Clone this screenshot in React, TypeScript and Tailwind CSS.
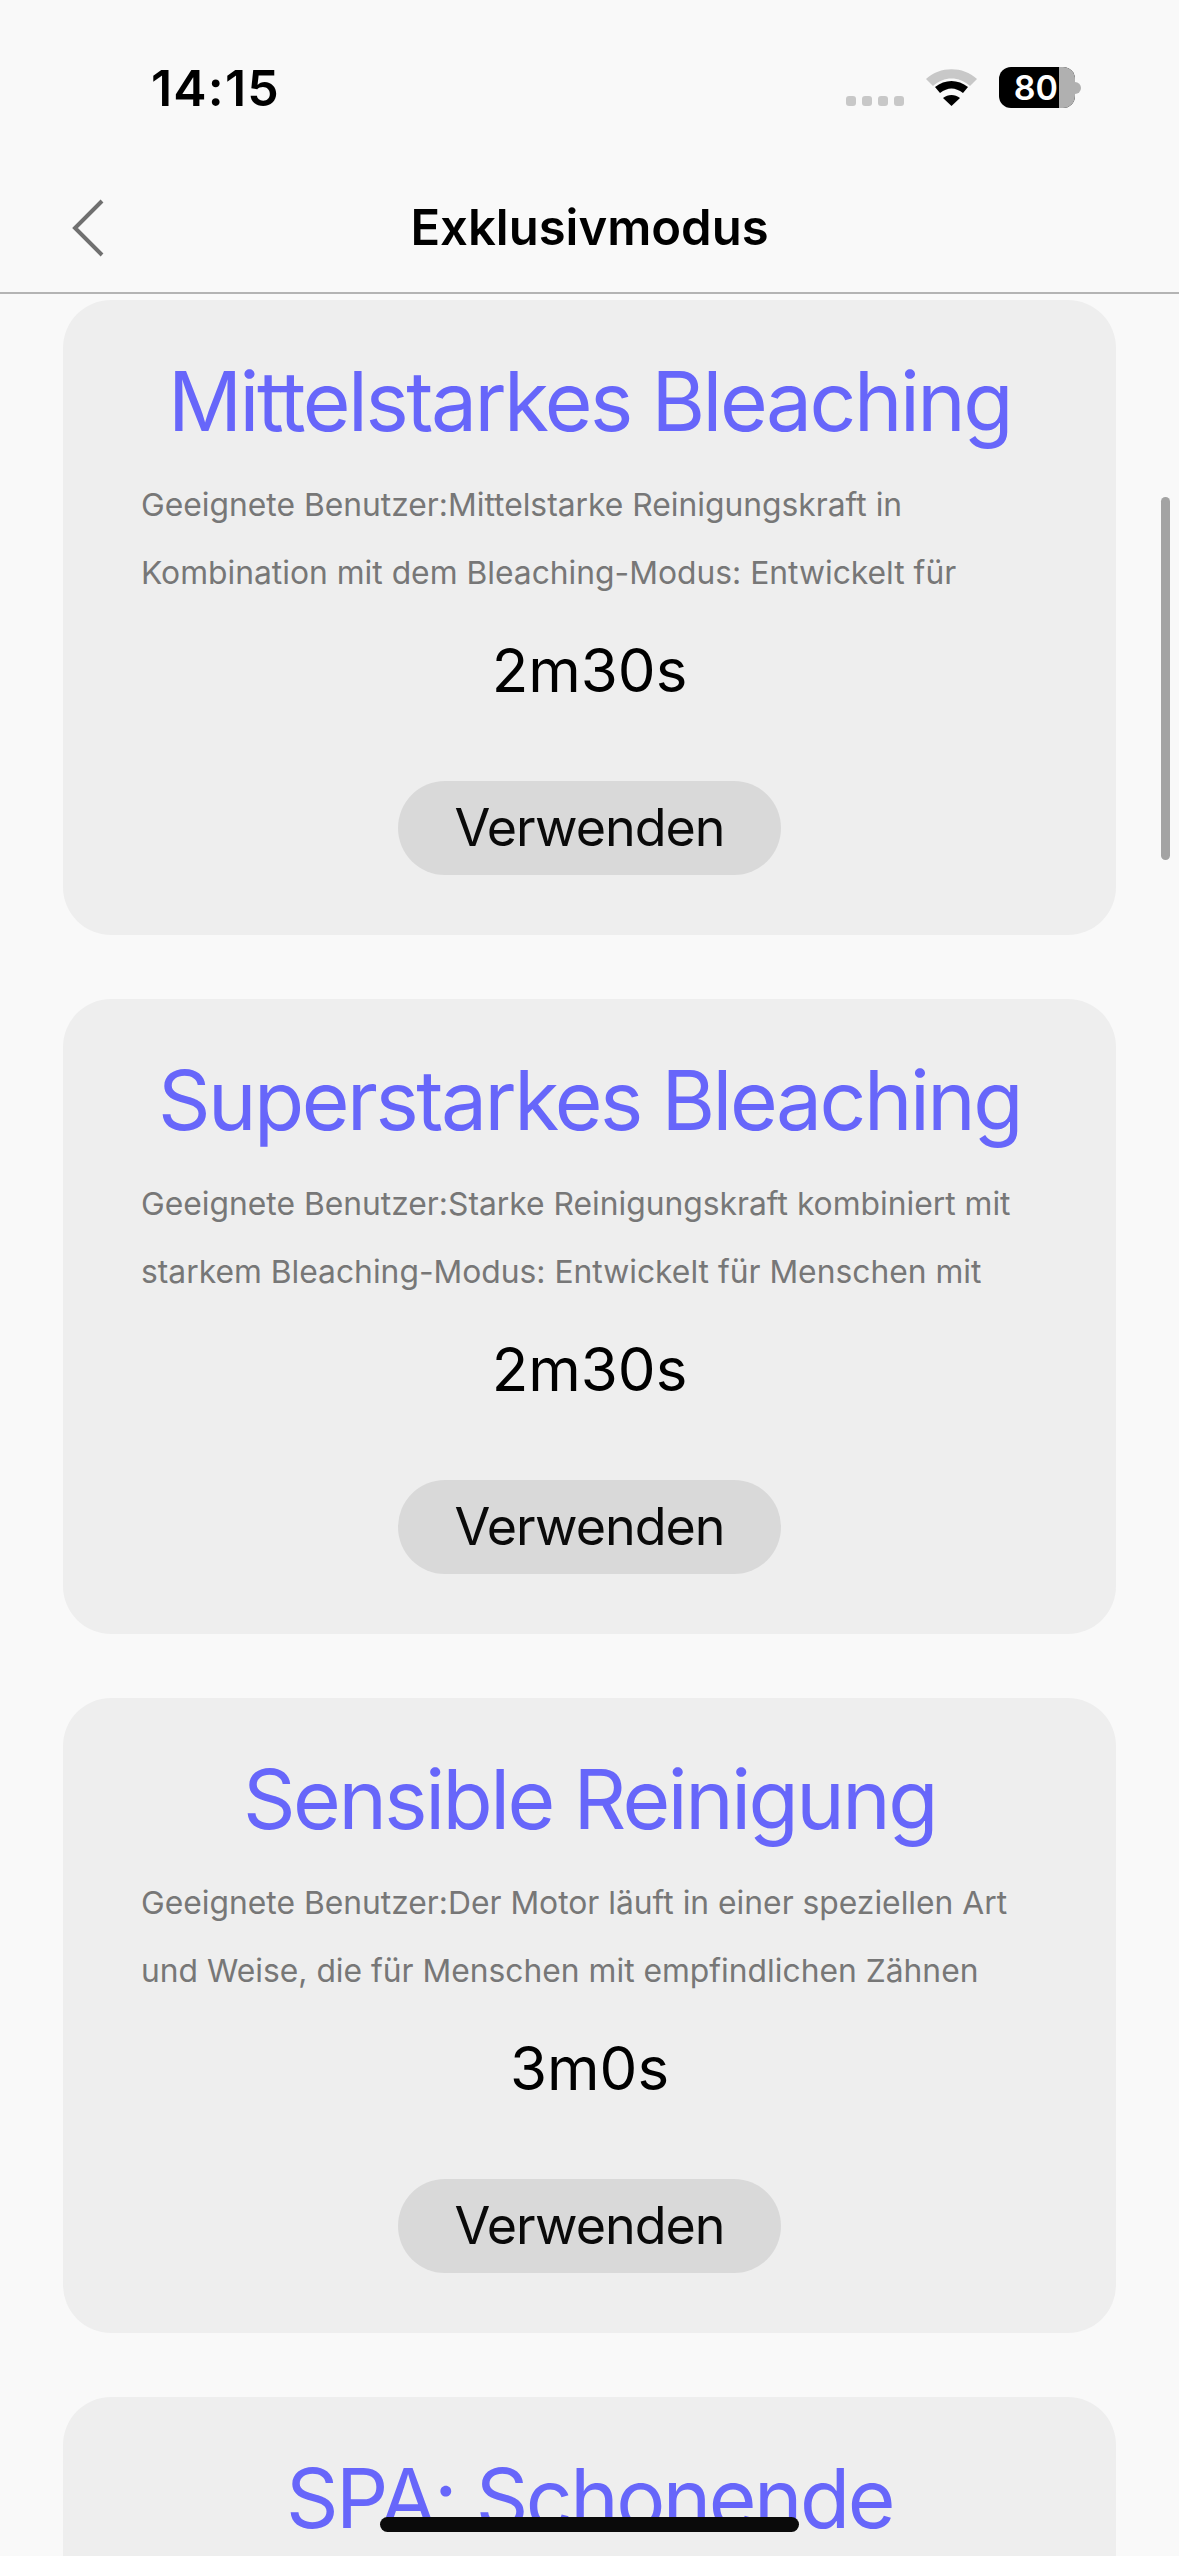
const cards = [
  {
    title: "Mittelstarkes Bleaching",
    l1: "Geeignete Benutzer:Mittelstarke Reinigungskraft in",
    l2: "Kombination mit dem Bleaching-Modus: Entwickelt für",
    time: "2m30s",
  },
  {
    title: "Superstarkes Bleaching",
    l1: "Geeignete Benutzer:Starke Reinigungskraft kombiniert mit",
    l2: "starkem Bleaching-Modus: Entwickelt für Menschen mit",
    time: "2m30s",
  },
  {
    title: "Sensible Reinigung",
    l1: "Geeignete Benutzer:Der Motor läuft in einer speziellen Art",
    l2: "und Weise, die für Menschen mit empfindlichen Zähnen",
    time: "3m0s",
  },
];

function Card({ c }: { c: (typeof cards)[number] }) {
  return (
    <div className="h-[635px] rounded-[48px] bg-[#eeeeee] flex flex-col items-center pt-[52px]">
      <div className="text-[82px] leading-[100px] text-[#6766fa] tracking-[-2.5px] whitespace-nowrap">{c.title}</div>
      <div className="self-stretch pl-[78px] mt-[19px] text-[31.8px] leading-[68px] text-[#777777] whitespace-nowrap">
        <div>{c.l1}</div>
        <div>{c.l2}</div>
      </div>
      <div className="mt-[27px] text-[60px] leading-[72px] text-black">{c.time}</div>
      <div className="mt-[75px] w-[383px] h-[94px] rounded-full bg-[#d9d9d9] flex items-center justify-center text-[52px] tracking-[-1px] text-[#0a0a0a]">
        Verwenden
      </div>
    </div>
  );
}

export default function App() {
  return (
    <div className="relative w-[1179px] h-[2556px] overflow-hidden bg-[#f9f9f9] font-['Inter',sans-serif]">
      <div className="h-[294px] border-b-2 border-[#b4b4b4] flex flex-col">
        <div className="h-[174px] flex items-start justify-between pl-[151px] pr-[98px] pt-[60px]">
          <div className="text-[50px] leading-[56px] font-semibold text-black tracking-[1.2px]">14:15</div>
          <div className="flex items-start gap-[22px] pt-[7px]">
            <div className="flex gap-[6px] mt-[29px]">
              <div className="w-[10px] h-[10px] rounded-[3px] bg-[#c8c8c8]" />
              <div className="w-[10px] h-[10px] rounded-[3px] bg-[#c8c8c8]" />
              <div className="w-[10px] h-[10px] rounded-[3px] bg-[#c8c8c8]" />
              <div className="w-[10px] h-[10px] rounded-[3px] bg-[#c8c8c8]" />
            </div>
            <svg className="mt-[2px]" width="51" height="37" viewBox="0 0 51 37">
              <path d="M0 10 C14 -3 37 -3 51 10 L44 17 C33 7 18 7 7 17 Z" fill="#c8c8c8" />
              <path d="M9 18 C19 10 32 10 42 18 L37 24 C29 18 22 18 14 24 Z" fill="#000" />
              <path d="M17 29 C22 25 29 25 34 29 L25.5 37 Z" fill="#000" />
            </svg>
            <div className="flex items-center">
              <div className="relative w-[76px] h-[41px] rounded-[12px] overflow-hidden bg-black">
                <div className="w-[59px] text-white text-[34px] leading-[41px] font-semibold text-right">80</div>
                <div className="absolute right-0 top-0 bottom-0 w-[16px] bg-[#b0b0b0]" />
              </div>
              <div className="w-[6px] h-[12px] rounded-r-full bg-[#b0b0b0]" />
            </div>
          </div>
        </div>
        <div className="relative flex-1 flex items-center justify-center">
          <svg className="absolute left-[70px] top-[24px]" width="36" height="60" viewBox="0 0 36 60" fill="none">
            <path d="M32 3 L5 30 L32 57" stroke="#707070" strokeWidth="4" />
          </svg>
          <div className="text-[49px] leading-[60px] font-semibold text-black -mt-[11px]">Exklusivmodus</div>
        </div>
      </div>
      <div className="px-[63px] pt-[6px] flex flex-col gap-[64px]">
        {cards.map((c) => (
          <Card key={c.title} c={c} />
        ))}
        <div className="h-[400px] rounded-[48px] bg-[#eeeeee] flex flex-col items-center pt-[52px]">
          <div className="text-[82px] leading-[100px] text-[#6766fa] tracking-[-2.5px] whitespace-nowrap">SPA: Schonende</div>
        </div>
      </div>
      <div className="absolute left-[1161px] top-[497px] w-[9px] h-[363px] rounded-full bg-[#a3a3a3]" />
      <div className="absolute left-[380px] top-[2517px] w-[419px] h-[15px] rounded-full bg-[#0a0a0a]" />
    </div>
  );
}
